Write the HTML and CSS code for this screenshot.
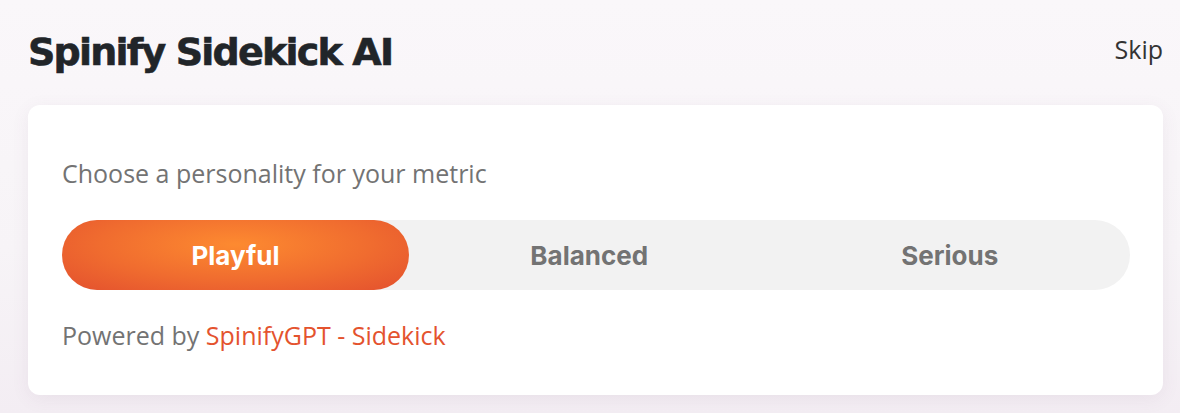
FILE: index.html
```html
<!DOCTYPE html>
<html lang="en">
<head>
  <meta charset="UTF-8">
  <meta name="viewport" content="width=device-width, initial-scale=1.0">
  <title>Spinify Sidekick AI</title>
  <link rel="stylesheet" href="styles.css">
</head>
<body>
  <div class="page">
    <header class="top">
      <h1 class="title">Spinify Sidekick AI</h1>
      <a class="skip" href="#">Skip</a>
    </header>

    <section class="card">
      <p class="label">Choose a personality for your metric</p>
      <div class="segments">
        <button class="seg active">Playful</button>
        <button class="seg">Balanced</button>
        <button class="seg">Serious</button>
      </div>
      <p class="powered">Powered by <a href="#">SpinifyGPT - Sidekick</a></p>
    </section>
  </div>
</body>
</html>
```

FILE: styles.css
```css
html, body { margin: 0; height: 100%; }
body {
  font-family: "Open Sans", "Noto Sans", sans-serif;
  background: linear-gradient(180deg, #faf7fa 0%, #f7f4f7 60%, #f3edf3 100%);
  color: #333;
}
.page { padding: 28px 17px 0 28px; }
.top { display: flex; justify-content: space-between; align-items: flex-start; height: 77px; }
.title {
  margin: 0;
  font-family: "DejaVu Sans", Verdana, sans-serif;
  font-weight: 700;
  font-size: 38px;
  line-height: 48px;
  letter-spacing: -1.8px;
  -webkit-text-stroke: 0.6px #212529;
  color: #212529;
}
.skip { margin-top: 4px; font-size: 25px; color: #333; text-decoration: none; line-height: 34px; }
.card {
  background: #fff;
  border-radius: 12px;
  padding: 51px 33px 43px 34px;
  box-shadow: 0 4px 18px rgba(120, 80, 120, 0.08);
}
.label { margin: 0 0 30px; font-size: 25px; line-height: 34px; color: #737373; }
.segments {
  display: grid;
  grid-template-columns: 347px 1fr 1fr;
  height: 70px;
  background: #f2f2f2;
  border-radius: 35px;
}
.seg {
  border: none;
  border-radius: 35px;
  background: transparent;
  font-family: Inter, Roboto, sans-serif;
  font-weight: 700;
  font-size: 26px;
  color: #737373;
  cursor: pointer;
}
.seg.active {
  color: #fff;
  background: radial-gradient(ellipse at 50% 35%, #fd8a30 0%, #f06c2f 55%, #e3502e 100%);
}
.powered { margin: 28px 0 0; font-size: 25px; line-height: 34px; color: #737373; }
.powered a { color: #e4532e; text-decoration: none; }
```
